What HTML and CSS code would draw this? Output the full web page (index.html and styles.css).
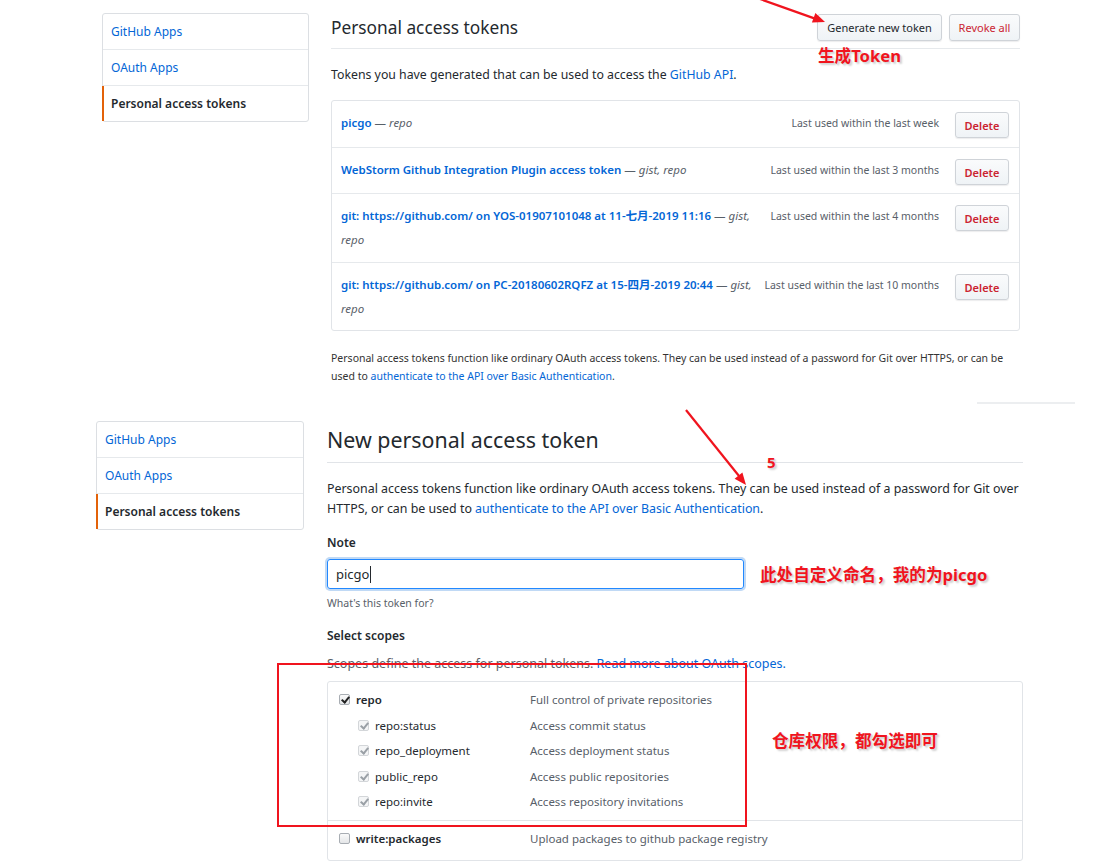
FILE: index.html
```html
<!DOCTYPE html>
<html lang="en">
<head>
<meta charset="utf-8">
<title>Personal access tokens</title>
<link rel="stylesheet" href="styles.css">
</head>
<body>
<div class="shot shot1">
  <nav class="side side1">
    <a class="side-item">GitHub Apps</a>
    <a class="side-item">OAuth Apps</a>
    <a class="side-item active">Personal access tokens</a>
  </nav>
  <main class="main1">
    <div class="head1">
      <h2 class="title1">Personal access tokens</h2>
      <div class="btns">
        <span class="btn btn-gen">Generate new token</span>
        <span class="btn btn-danger">Revoke all</span>
      </div>
    </div>
    <p class="intro1">Tokens you have generated that can be used to access the <a class="link">GitHub API</a>.</p>
    <div class="list">
      <div class="row r1">
        <div class="tok"><b class="tname">picgo</b> <span class="dash">—</span> <em class="scope">repo</em></div>
        <div class="used">Last used within the last week</div>
        <span class="btn btn-del">Delete</span>
      </div>
      <div class="row r2">
        <div class="tok"><b class="tname">WebStorm Github Integration Plugin access token</b> <span class="dash">—</span> <em class="scope">gist, repo</em></div>
        <div class="used">Last used within the last 3 months</div>
        <span class="btn btn-del">Delete</span>
      </div>
      <div class="row r3">
        <div class="tok"><b class="tname">git: https://github.com/ on YOS-01907101048 at 11-七月-2019 11:16</b> <span class="dash">—</span> <em class="scope">gist,<br>repo</em></div>
        <div class="used">Last used within the last 4 months</div>
        <span class="btn btn-del">Delete</span>
      </div>
      <div class="row r4">
        <div class="tok"><b class="tname">git: https://github.com/ on PC-20180602RQFZ at 15-四月-2019 20:44</b> <span class="dash">—</span> <em class="scope">gist,<br>repo</em></div>
        <div class="used">Last used within the last 10 months</div>
        <span class="btn btn-del">Delete</span>
      </div>
    </div>
    <p class="note1">Personal access tokens function like ordinary OAuth access tokens. They can be used instead of a password for Git over HTTPS, or can be<br>used to <a class="link">authenticate to the API over Basic Authentication</a>.</p>
  </main>
</div>

<div class="frag"></div>

<div class="shot shot2">
  <nav class="side side2">
    <a class="side-item">GitHub Apps</a>
    <a class="side-item">OAuth Apps</a>
    <a class="side-item active">Personal access tokens</a>
  </nav>
  <main class="main2">
    <h2 class="title2">New personal access token</h2>
    <p class="intro2">Personal access tokens function like ordinary OAuth access tokens. They can be used instead of a password for Git over<br>HTTPS, or can be used to <a class="link">authenticate to the API over Basic Authentication</a>.</p>
    <div class="lbl">Note</div>
    <div class="input"><span class="val">picgo</span><span class="caret"></span></div>
    <div class="hint">What's this token for?</div>
    <div class="lbl lbl2">Select scopes</div>
    <div class="scopes-note">Scopes define the access for personal tokens. <a class="link">Read more about OAuth scopes.</a></div>
    <div class="scopes">
      <div class="group">
        <div class="srow"><span class="cb checked"></span><span class="sname">repo</span><span class="sdesc">Full control of private repositories</span></div>
        <div class="srow sub"><span class="cb checked dis"></span><span class="sname">repo:status</span><span class="sdesc">Access commit status</span></div>
        <div class="srow sub"><span class="cb checked dis"></span><span class="sname">repo_deployment</span><span class="sdesc">Access deployment status</span></div>
        <div class="srow sub"><span class="cb checked dis"></span><span class="sname">public_repo</span><span class="sdesc">Access public repositories</span></div>
        <div class="srow sub"><span class="cb checked dis"></span><span class="sname">repo:invite</span><span class="sdesc">Access repository invitations</span></div>
      </div>
      <div class="group">
        <div class="srow"><span class="cb"></span><span class="sname">write:packages</span><span class="sdesc">Upload packages to github package registry</span></div>
      </div>
    </div>
  </main>
</div>

<div class="ann ann-gen">生成Token</div>
<div class="ann ann-five">5</div>
<div class="ann ann-note">此处自定义命名，我的为picgo</div>
<div class="ann ann-repo">仓库权限，都勾选即可</div>
<div class="redbox"></div>
<svg class="arrows" width="1118" height="864" viewBox="0 0 1118 864">
  <line x1="760" y1="-1" x2="815" y2="18.6" stroke="#f0141e" stroke-width="2.2"/>
  <polygon points="825,22 811.9,22.6 815.4,13.1" fill="#f0141e"/>
  <line x1="686" y1="410" x2="739" y2="476" stroke="#f0141e" stroke-width="2.2"/>
  <polygon points="746,485 734.6,478.7 742.4,472.5" fill="#f0141e"/>
</svg>
</body>
</html>
```

FILE: styles.css
```css
* { box-sizing: border-box; }
html, body { margin: 0; padding: 0; }
body {
  width: 1118px;
  height: 864px;
  overflow: hidden;
  position: relative;
  background: #fff;
  color: #24292e;
  font-family: "Noto Sans", "Noto Sans CJK SC", sans-serif;
}
p { margin: 0; }
.link { color: #0366d6; text-decoration: none; }

.shot { display: flex; align-items: flex-start; gap: 23px; }
.shot1 { padding: 13px 0 0 102px; gap: 22px; }
.shot2 { padding: 17px 0 0 96px; }

/* sidebar */
.side {
  display: flex;
  flex-direction: column;
  border: 1px solid #dcdfe3;
  border-radius: 3px;
  background: #fff;
}
.side1 { width: 207px; }
.side2 { width: 208px; }
.side-item {
  height: 36px;
  display: flex;
  align-items: center;
  padding-left: 8px;
  font-size: 12px;
  color: #0366d6;
  border-bottom: 1px solid #e6e9ec;
}
.side-item:last-child { border-bottom: 0; height: 35px; }
.side-item.active {
  color: #24292e;
  font-weight: 600;
  border-left: 2px solid #e36209;
  padding-left: 7px;
  margin-left: -1px;
}

/* top screenshot */
.main1 { width: 689px; }
.head1 {
  display: flex;
  justify-content: space-between;
  align-items: flex-start;
  height: 36px;
  border-bottom: 1px solid #e6e9ec;
}
.title1 {
  margin: 0;
  font-size: 17.3px;
  font-weight: 400;
  line-height: 30px;
  color: #24292e;
}
.btns { display: flex; gap: 7px; margin-top: 1px; }
.btn {
  display: inline-flex;
  align-items: center;
  justify-content: center;
  height: 27px;
  padding: 0;
  font-size: 11px;
  font-weight: 400;
  color: #24292e;
  background: linear-gradient(#fafbfc, #eff3f6);
  border: 1px solid #cfd3d8;
  border-radius: 3px;
  box-shadow: 0 1px 1px rgba(27,31,35,.08);
}
.btn-gen { width: 125px; }
.btn-danger { color: #cb2431; width: 71px; }
.intro1 { font-size: 12.3px; line-height: 20px; margin-top: 16px; }
.list {
  margin-top: 15px;
  border: 1px solid #e1e4e8;
  border-radius: 3px;
}
.row {
  display: flex;
  align-items: flex-start;
  padding: 10px 10px 10px 9px;
  border-top: 1px solid #e6e9ec;
}
.row:first-child { border-top: 0; }
.r1 { height: 46px; }
.r2 { height: 46px; }
.r3 { height: 69px; }
.r4 { height: 68px; }
.tok {
  flex: 1;
  font-size: 11.5px;
  line-height: 24px;
  color: #0366d6;
}
.tname { font-weight: 600; }
.dash { color: #586069; }
.scope { color: #586069; }
.used {
  font-size: 10.5px;
  line-height: 24px;
  color: #586069;
  white-space: nowrap;
  margin-left: 10px;
}
.btn-del {
  margin-left: 16px;
  margin-top: 1px;
  height: 26px;
  width: 54px;
  font-weight: 600;
  color: #cb2431;
}
.note1 { margin-top: 18px; font-size: 10.5px; line-height: 18px; color: #333; }

.frag {
  width: 98px;
  height: 2px;
  margin: 17px 0 0 977px;
  background: #eceef0;
}

/* bottom screenshot */
.main2 { width: 696px; }
.title2 {
  margin: 0;
  font-size: 21.4px;
  font-weight: 400;
  line-height: 38px;
  padding-bottom: 3px;
  border-bottom: 1px solid #e1e4e8;
}
.intro2 { margin-top: 16px; font-size: 12.4px; line-height: 20px; }
.lbl { margin-top: 14px; font-size: 12px; font-weight: 600; line-height: 20px; }
.lbl2 { margin-top: 15px; }
.input {
  margin-top: 6px;
  width: 417px;
  height: 30px;
  display: flex;
  align-items: center;
  padding-left: 8px;
  border: 1px solid #2188ff;
  border-radius: 3px;
  box-shadow: 0 0 0 2px rgba(3,102,214,.25);
  font-size: 13px;
}
.caret { width: 1px; height: 17px; background: #24292e; margin-left: 1px; }
.hint { margin-top: 6px; font-size: 10.5px; line-height: 16px; color: #586069; }
.scopes-note { margin-top: 9px; font-size: 12.5px; line-height: 18px; color: #586069; }
.scopes {
  margin-top: 8px;
  height: 180px;
  border: 1px solid #e1e4e8;
  border-radius: 3px;
}
.group { padding: 5px 0; border-top: 1px solid #e1e4e8; }
.group:first-child { border-top: 0; }
.srow {
  display: flex;
  align-items: center;
  height: 25.5px;
  padding-left: 11px;
  font-size: 11.5px;
}
.srow.sub { padding-left: 30px; }
.sname { font-weight: 600; margin-left: 6px; }
.srow .sname { width: 174px; }
.srow.sub .sname { width: 155px; font-weight: 400; }
.sdesc { color: #586069; }
.cb {
  position: relative;
  width: 11px;
  height: 11px;
  border: 1px solid #a8adb3;
  border-radius: 2px;
  background: linear-gradient(#fafafa, #e4e6e8);
  flex: none;
}
.cb.checked::after {
  content: "";
  position: absolute;
  left: 3px;
  top: 0px;
  width: 3px;
  height: 6px;
  border: solid #222;
  border-width: 0 2px 2px 0;
  transform: rotate(40deg);
}
.cb.dis { border-color: #d3d6d9; background: #f4f5f6; }
.cb.dis::after { border-color: #9aa0a6; }

/* annotations overlay */
.ann {
  position: absolute;
  color: #f0141e;
  font-weight: 700;
  font-size: 16.6px;
  line-height: 20px;
  white-space: nowrap;
  text-shadow: 1px 1px 0 #d8d8d8, 2px 2px 2px rgba(0,0,0,.18);
}
.ann-gen { left: 818px; top: 46px; }
.ann-five { left: 767px; top: 452px; font-size: 15px; }
.ann-note { left: 760px; top: 565px; }
.ann-repo { left: 772px; top: 731px; }
.redbox {
  position: absolute;
  left: 277px;
  top: 663px;
  width: 470px;
  height: 164px;
  border: 2px solid #f0141e;
}
.arrows { position: absolute; left: 0; top: 0; pointer-events: none; }
```
